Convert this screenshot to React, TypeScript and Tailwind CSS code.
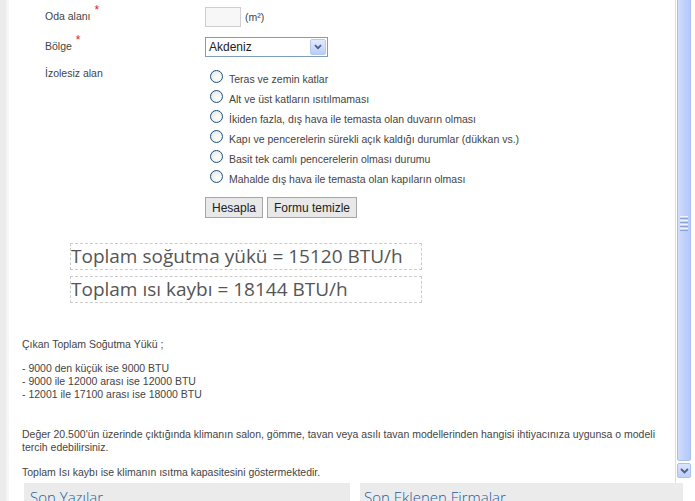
import React from "react";

const small = "font-['Liberation_Sans',Arial,sans-serif] text-[10.5px] leading-[13px] text-[#444]";

function Radio({ label }: { label: string }) {
  return (
    <div className="flex h-[20px] items-center">
      <span className="block h-[13px] w-[13px] rounded-full border border-[#1c5180] bg-[radial-gradient(circle_at_60%_60%,#ffffff_0%,#f0f0ea_55%,#d8dbe0_100%)]" />
      <span className={`${small} ml-[6px] mt-[6px]`}>{label}</span>
    </div>
  );
}

export default function App() {
  const radios = [
    "Teras ve zemin katlar",
    "Alt ve üst katların ısıtılmaması",
    "İkiden fazla, dış hava ile temasta olan duvarın olması",
    "Kapı ve pencerelerin sürekli açık kaldığı durumlar (dükkan vs.)",
    "Basit tek camlı pencerelerin olması durumu",
    "Mahalde dış hava ile temasta olan kapıların olması",
  ];
  return (
    <div className="flex h-[501px] w-[695px] overflow-hidden bg-white">
      <div className="flex h-full w-[9px] shrink-0">
        <div className="h-full w-[6px] bg-[#ececec]" />
        <div className="h-full w-[3px] bg-[#f5f5f5]" />
      </div>
      <div className="flex min-w-0 flex-1 flex-col">
        <div className="flex h-[483px] shrink-0">
          <div className="min-w-0 flex-1 pl-[13px] pr-[6px]">
            <div className="pt-[7px]">
              <div className="flex items-start">
                <div className={`${small} w-[183px] shrink-0 pl-[23px] pt-[3px]`}>
                  Oda alanı<sup className="ml-[4px] text-[12px] text-[#e02020]">*</sup>
                </div>
                <div className="h-[20px] w-[36px] border border-[#cfcfcf] bg-[#f7f7f7]" />
                <span className={`${small} ml-[4px] pt-[4px]`}>(m²)</span>
              </div>
              <div className="mt-[10px] flex items-start">
                <div className={`${small} w-[183px] shrink-0 pl-[23px] pt-[3px]`}>
                  Bölge<sup className="ml-[4px] text-[12px] text-[#e02020]">*</sup>
                </div>
                <div className="flex h-[20px] w-[123px] items-center border border-[#7f9db9] bg-white pl-[3px]">
                  <span className="flex-1 font-['Liberation_Sans',Arial,sans-serif] text-[12px] text-[#222]">Akdeniz</span>
                  <span className="mr-[1px] flex h-[16px] w-[16px] items-center justify-center rounded-[2px] border border-[#b8c9f0] bg-[linear-gradient(#e2eafd,#b9cdf8)]">
                    <svg width="8" height="6" viewBox="0 0 8 6">
                      <path d="M1 1.2 L4 4.2 L7 1.2" stroke="#4d6185" strokeWidth="1.8" fill="none" />
                    </svg>
                  </span>
                </div>
              </div>
              <div className="mt-[10px] flex items-start">
                <div className={`${small} w-[188px] shrink-0 pl-[23px]`}>İzolesiz alan</div>
                <div className="-mt-[1px] flex flex-col">
                  {radios.map((r) => (
                    <Radio key={r} label={r} />
                  ))}
                </div>
              </div>
              <div className="mt-[11px] flex gap-[4px] pl-[183px]">
                <button className="h-[21px] border border-[#a6a6a6] bg-[#e8e8e8] px-[6px] font-['Liberation_Sans',Arial,sans-serif] text-[12px] text-[#222]">
                  Hesapla
                </button>
                <button className="h-[21px] border border-[#a6a6a6] bg-[#e8e8e8] px-[6px] font-['Liberation_Sans',Arial,sans-serif] text-[12px] text-[#222]">
                  Formu temizle
                </button>
              </div>
              <div className="ml-[48px] mt-[25px] flex w-[352px] flex-col gap-[6px]">
                <div className="flex h-[27px] items-center border border-dashed border-[#cccccc] font-['Open_Sans',sans-serif] text-[19px] leading-[27px] text-[#555]">
                  Toplam soğutma yükü = 15120 BTU/h
                </div>
                <div className="flex h-[27px] items-center border border-dashed border-[#cccccc] font-['Open_Sans',sans-serif] text-[19px] leading-[27px] text-[#555]">
                  Toplam ısı kaybı = 18144 BTU/h
                </div>
              </div>
              <div className={`${small} mt-[35px]`}>Çıkan Toplam Soğutma Yükü ;</div>
              <div className={`${small} mt-[11px]`}>
                <div>- 9000 den küçük ise 9000 BTU</div>
                <div>- 9000 ile 12000 arası ise 12000 BTU</div>
                <div>- 12001 ile 17100 arası ise 18000 BTU</div>
              </div>
              <div className={`${small} mt-[27px] pr-[4px]`}>
                Değer 20.500'ün üzerinde çıktığında klimanın salon, gömme, tavan veya asılı tavan modellerinden hangisi ihtiyacınıza uygunsa o modeli tercih edebilirsiniz.
              </div>
              <div className={`${small} mt-[12px]`}>Toplam Isı kaybı ise klimanın ısıtma kapasitesini göstermektedir.</div>
            </div>
          </div>
          <div className="flex w-[17px] shrink-0 flex-col border-l border-[#dedede] pl-[1px] pr-[1px]">
            <div className="relative -mt-[3px] h-[464px] rounded-[2px] border border-[#a9bfee] bg-[linear-gradient(90deg,#d2ddfc,#bccffb_60%,#b6cafa)]">
              <div className="absolute left-[2px] top-[218px] flex w-[8px] flex-col gap-[1px]">
                <div className="h-[1px] bg-[#eef2fe]" />
                <div className="h-[1px] bg-[#8ca4d8]" />
                <div className="h-[1px] bg-[#eef2fe]" />
                <div className="h-[1px] bg-[#8ca4d8]" />
                <div className="h-[1px] bg-[#eef2fe]" />
                <div className="h-[1px] bg-[#8ca4d8]" />
                <div className="h-[1px] bg-[#eef2fe]" />
                <div className="h-[1px] bg-[#8ca4d8]" />
              </div>
            </div>
            <div className="mt-[2px] flex h-[15px] items-center justify-center rounded-[2px] border border-[#a9bfee] bg-[linear-gradient(#dbe5fd,#bccffb)]">
              <svg width="9" height="6" viewBox="0 0 9 6">
                <path d="M1 1 L4.5 4.5 L8 1" stroke="#4d6185" strokeWidth="1.8" fill="none" />
              </svg>
            </div>
          </div>
          <div className="w-[3px] shrink-0" />
        </div>
        <div className="flex pl-[15px] pt-0">
          <div className="h-[20px] w-[326px] bg-[#ebebeb] pl-[6px] pt-[5px] font-['Open_Sans',sans-serif] text-[15px] font-light leading-[18px] text-[#1b5c9e]">
            Son Yazılar
          </div>
          <div className="ml-[10px] h-[20px] w-[323px] bg-[#ebebeb] pl-[4px] pt-[5px] font-['Open_Sans',sans-serif] text-[15px] font-light leading-[18px] text-[#1b5c9e]">
            Son Eklenen Firmalar
          </div>
        </div>
      </div>
    </div>
  );
}
